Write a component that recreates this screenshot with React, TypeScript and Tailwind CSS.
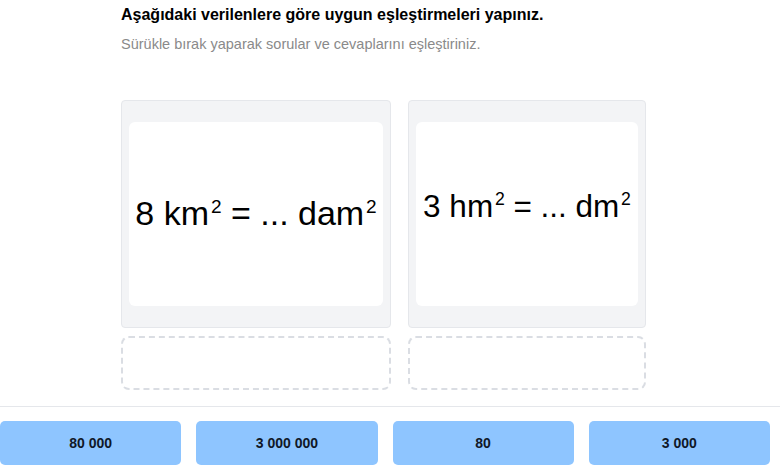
import React from "react";

const questions = [
  { id: 1, value: "8", unitA: "km", unitB: "dam", width: "w-[270px]", pad: "pb-[2px]", size: "text-[34px]" },
  { id: 2, value: "3", unitA: "hm", unitB: "dm", width: "w-[238px]", pad: "pb-[15px]", size: "text-[31.5px]" },
];

const answers = ["80 000", "3 000 000", "80", "3 000"];

// superscript sized off the parent text
const Sq = () => (
  <sup className="text-[0.56em] relative -top-[0.64em] ml-[0.1em]">2</sup>
);

const App = () => {
  return (
    <div className="w-[780px] h-[470px] bg-white overflow-hidden font-['Liberation_Sans',Arial,sans-serif]">
      {/* Header + questions */}
      <div className="w-[538px] mx-auto pt-[5px]">
        <h1 className="text-[16px] leading-[20px] font-bold text-black">
          Aşağıdaki verilenlere göre uygun eşleştirmeleri yapınız.
        </h1>
        <p className="mt-[10px] text-[14.5px] leading-[18px] text-[#8a8a8a]">
          Sürükle bırak yaparak sorular ve cevaplarını eşleştiriniz.
        </p>

        <div className="mt-[47px] flex gap-[17px]">
          {questions.map((q) => (
            <div key={q.id} className={`${q.width} flex flex-col gap-[8px]`}>
              <div className="h-[228px] bg-gray-100 border border-gray-200 rounded-[4px] px-[7px] py-[21px]">
                <div
                  className={`h-full bg-white rounded-[6px] flex items-center justify-center ${q.pad}`}
                >
                  <span className={`${q.size} leading-none text-black whitespace-nowrap`}>
                    {q.value} {q.unitA}
                    <Sq /> = ... {q.unitB}
                    <Sq />
                  </span>
                </div>
              </div>
              {/* Drop zone */}
              <div className="h-[54px] border-2 border-dashed border-gray-300/80 rounded-[8px]" />
            </div>
          ))}
        </div>
      </div>

      {/* Answer tray */}
      <div className="mt-[16px] border-t border-gray-200 pt-[14px] pr-[10px] flex gap-[15px]">
        {answers.map((a) => (
          <button
            key={a}
            className="flex-1 h-[44px] bg-blue-300 rounded-[5px] text-[14px] font-bold text-gray-900"
          >
            {a}
          </button>
        ))}
      </div>
    </div>
  );
};

export default App;
